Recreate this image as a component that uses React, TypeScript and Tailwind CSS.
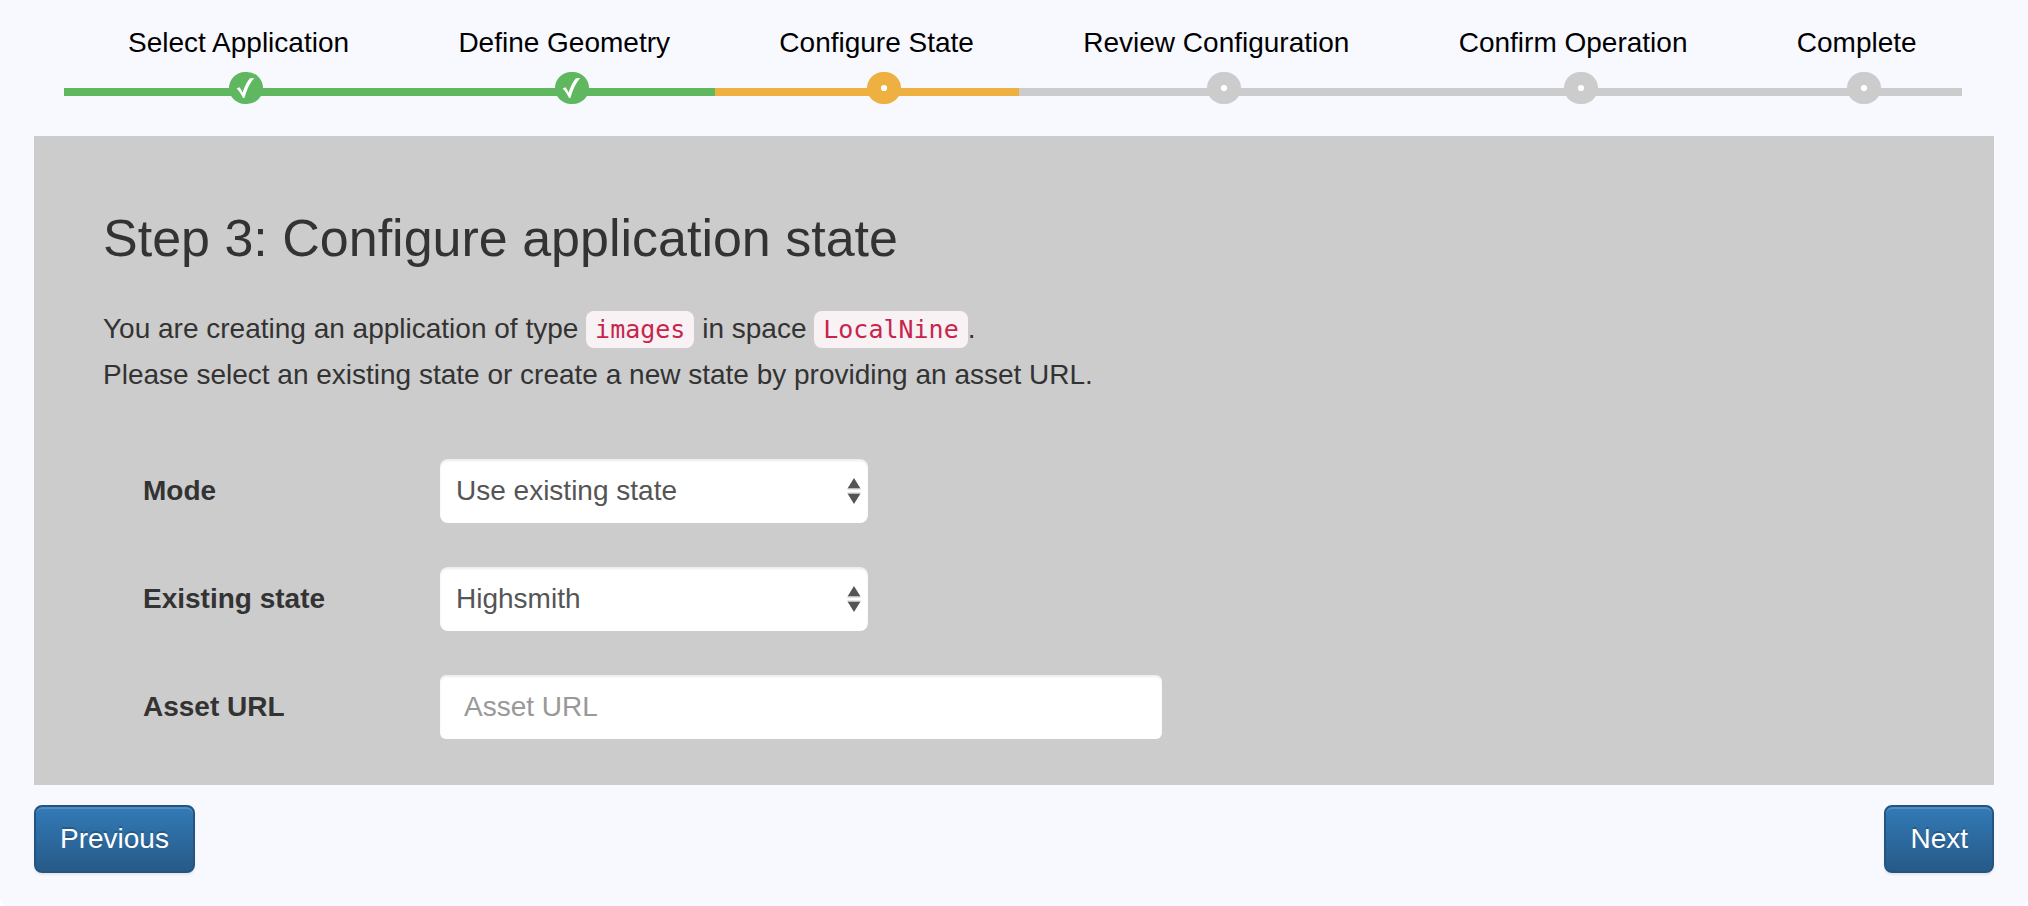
import React, { useState } from 'react';

type StepStatus = 'done' | 'active' | 'pending';

interface Step {
  label: string;
  status: StepStatus;
}

const steps: Step[] = [
  { label: 'Select Application', status: 'done' },
  { label: 'Define Geometry', status: 'done' },
  { label: 'Configure State', status: 'active' },
  { label: 'Review Configuration', status: 'pending' },
  { label: 'Confirm Operation', status: 'pending' },
  { label: 'Complete', status: 'pending' },
];

const lineColor: Record<StepStatus, string> = {
  done: 'border-[#5fb760]',
  active: 'border-[#eeb141]',
  pending: 'border-[#cccccc]',
};

const markerColor: Record<StepStatus, string> = {
  done: 'text-[#5fb760]',
  active: 'text-[#eeb141]',
  pending: 'text-[#cccccc]',
};

function Marker({ status }: { status: StepStatus }) {
  return (
    <svg
      viewBox="0 0 34 32"
      aria-hidden="true"
      className={`absolute left-1/2 top-[72px] h-8 w-[34px] ${markerColor[status]}`}
    >
      <rect width="34" height="32" rx="16" fill="currentColor" />
      {status === 'done' ? (
        <path
          d="M7.6 16.6 L10.6 15.2 C12 17 12.8 18.8 13.6 20.6 C15.6 14.4 18 9.4 21 6.2 L25.2 6 C20.6 11.4 17.6 18 15.4 26 L14 26 C12.2 22.4 10.2 19 7.6 16.6 Z"
          fill="#fff"
        />
      ) : (
        <circle cx="17" cy="16" r="3.1" fill="#fff" />
      )}
    </svg>
  );
}

function Progress() {
  return (
    <ol className="ml-[30px] mr-8 flex">
      {steps.map((step) => (
        <li
          key={step.label}
          aria-current={step.status === 'active' ? 'step' : undefined}
          className={`relative h-24 grow border-b-8 pl-16 pr-[42px] pt-[23px] leading-10 whitespace-nowrap text-black ${lineColor[step.status]}`}
        >
          {step.label}
          <Marker status={step.status} />
        </li>
      ))}
    </ol>
  );
}

function Code({ children }: { children: React.ReactNode }) {
  return (
    <code className="rounded-lg bg-[#f9f2f4] px-[9px] py-1 font-['DejaVu_Sans_Mono',monospace] text-[25px] text-[#c7254e]">
      {children}
    </code>
  );
}

const fieldClass =
  'h-16 max-w-full bg-white shadow-[inset_0_2px_2px_rgba(0,0,0,0.075)] outline-none focus-visible:ring-2 focus-visible:ring-[#66afe9]';

function Field({ id, label, children }: { id: string; label: string; children: React.ReactNode }) {
  return (
    <div className="flex items-center">
      <label htmlFor={id} className="w-[297px] shrink-0 font-bold">
        {label}
      </label>
      {children}
    </div>
  );
}

interface SelectProps {
  id: string;
  value: string;
  options: string[];
  onChange: (value: string) => void;
}

function Select({ id, value, options, onChange }: SelectProps) {
  return (
    <div className="relative w-[428px] max-w-full">
      <select
        id={id}
        value={value}
        onChange={(e) => onChange(e.target.value)}
        className={`${fieldClass} w-full appearance-none rounded-lg pl-4 pr-8 text-[#555555]`}
      >
        {options.map((option) => (
          <option key={option}>{option}</option>
        ))}
      </select>
      <svg
        viewBox="0 0 14 26"
        aria-hidden="true"
        className="pointer-events-none absolute right-[7px] top-[19px] h-[26px] w-3.5"
      >
        <path d="M7 0 L13.5 10.5 H0.5 Z M7 26 L0.5 15.5 H13.5 Z" fill="#555" />
        <path d="M0.5 11 H13.5 M0.5 15 H13.5" stroke="#ccc" strokeWidth="1" />
      </svg>
    </div>
  );
}

function Button({ children }: { children: React.ReactNode }) {
  return (
    <button
      type="button"
      className="h-[68px] cursor-pointer rounded-lg border-2 border-[#245580] bg-linear-to-b from-[#337ab7] to-[#265a88] px-6 text-white shadow-[inset_0_2px_0_rgba(255,255,255,0.15),0_2px_2px_rgba(0,0,0,0.075)] [text-shadow:0_-2px_0_rgba(0,0,0,0.2)]"
    >
      {children}
    </button>
  );
}

export default function App() {
  const [mode, setMode] = useState('Use existing state');
  const [existing, setExisting] = useState('Highsmith');
  const [url, setUrl] = useState('');

  return (
    <div className="min-h-screen rounded-b-lg bg-[#f8f9ff] px-[34px] pb-8 font-['Liberation_Sans',Arial,sans-serif] text-[28px] leading-10 text-[#333333]">
      <Progress />
      <main className="mt-10 bg-[#cccccc] px-[69px] pb-[46px] pt-[72px]">
        <h1 className="text-[52px] leading-[60px]">Step 3: Configure application state</h1>
        <p className="mt-[38px] leading-[45px]">
          You are creating an application of type <Code>images</Code> in space <Code>LocalNine</Code>.
          <br />
          Please select an existing state or create a new state by providing an asset URL.
        </p>
        <form className="mt-[62px] flex flex-col gap-11 pl-10" onSubmit={(e) => e.preventDefault()}>
          <Field id="mode" label="Mode">
            <Select
              id="mode"
              value={mode}
              options={['Use existing state', 'Create new state']}
              onChange={setMode}
            />
          </Field>
          <Field id="existing-state" label="Existing state">
            <Select id="existing-state" value={existing} options={['Highsmith']} onChange={setExisting} />
          </Field>
          <Field id="asset-url" label="Asset URL">
            <input
              id="asset-url"
              type="text"
              placeholder="Asset URL"
              value={url}
              onChange={(e) => setUrl(e.target.value)}
              className={`${fieldClass} w-[722px] rounded-md px-6 text-[#555555] placeholder:text-[#999999]`}
            />
          </Field>
        </form>
      </main>
      <div className="mt-5 flex justify-between">
        <Button>Previous</Button>
        <Button>Next</Button>
      </div>
    </div>
  );
}
